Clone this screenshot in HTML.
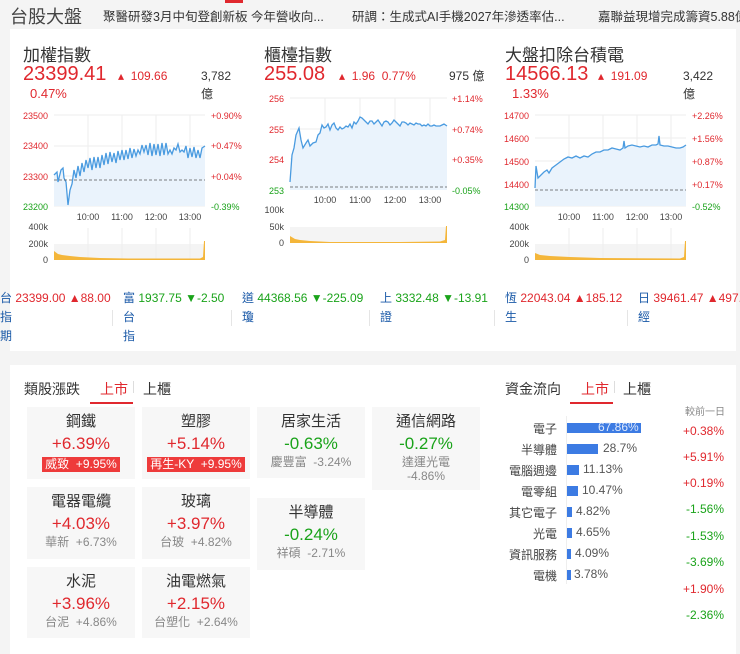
<!DOCTYPE html>
<html><head><meta charset="utf-8"><style>
*{margin:0;padding:0;box-sizing:border-box}
body{width:740px;height:654px;background:#f4f4f4;font-family:"Liberation Sans","Noto Sans CJK TC",sans-serif;position:relative;overflow:hidden;color:#333}
.a{position:absolute;white-space:nowrap}
.r{color:#e0282e}.g{color:#1aa31a}.bl{color:#1b5aa8}
.card{position:absolute;background:#fff}
.tile{position:absolute;background:#f7f7f7;text-align:center;width:108px}
.tile .n{font-size:15px;color:#333;margin-top:6px;line-height:18px}
.tile .p{font-size:17px;line-height:22px;margin-top:2px}
.tile .s{font-size:12px;color:#888;line-height:14px}
.tag{display:inline-block;background:#ee3b3b;color:#fff;font-size:12px;padding:0 3px;line-height:15px}
.rl{position:absolute;font-size:12px;color:#444;text-align:right;width:70px;left:487px}
.bar{position:absolute;left:567px;height:10px;background:#3c7be3}
.bv{position:absolute;font-size:12px;color:#555}
.cv{position:absolute;right:16px;font-size:12px}
</style></head><body>
<div class="a" style="left:225px;top:0;width:18px;height:3px;background:#e0282e"></div>
<div class="a" style="left:10px;top:3px;font-size:18px;color:#444">台股大盤</div>
<div class="a" style="left:103px;top:6px;font-size:12.5px;color:#333">聚醫研發3月中旬登創新板 今年營收向...</div>
<div class="a" style="left:352px;top:6px;font-size:12.5px;color:#333">研調：生成式AI手機2027年滲透率估...</div>
<div class="a" style="left:598px;top:6px;font-size:12.5px;color:#333">嘉聯益現增完成籌資5.88億</div>

<div class="card" style="left:10px;top:29px;width:726px;height:322px"></div>

<div class="a" style="left:23px;top:41px;font-size:17px;color:#333">加權指數</div>
<div class="a r" style="left:23px;top:63px;font-size:20px">23399.41</div>
<div class="a r" style="left:118px;top:69px;font-size:12px">▴ &nbsp;109.66</div>
<div class="a" style="left:201px;top:67px;font-size:12px;color:#333;line-height:18px">3,782<br>億</div>
<div class="a r" style="left:30px;top:86px;font-size:13px">0.47%</div>
<div class="a" style="left:264px;top:41px;font-size:17px;color:#333">櫃檯指數</div>
<div class="a r" style="left:264px;top:63px;font-size:20px">255.08</div>
<div class="a r" style="left:339px;top:69px;font-size:12px">▴ &nbsp;1.96 &nbsp;0.77%</div>
<div class="a" style="left:449px;top:67px;font-size:12px;color:#333">975 億</div>
<div class="a" style="left:505px;top:41px;font-size:17px;color:#333">大盤扣除台積電</div>
<div class="a r" style="left:505px;top:63px;font-size:20px">14566.13</div>
<div class="a r" style="left:598px;top:69px;font-size:12px">▴ &nbsp;191.09</div>
<div class="a" style="left:683px;top:67px;font-size:12px;color:#333;line-height:18px">3,422<br>億</div>
<div class="a r" style="left:512px;top:86px;font-size:13px">1.33%</div>

<svg class="a" style="left:0;top:0" width="740" height="270" font-family="Liberation Sans" font-size="9">
<g>
<g stroke="#eee" stroke-width="1"><line x1="54" y1="115" x2="205" y2="115"/><line x1="54" y1="146" x2="205" y2="146"/><line x1="54" y1="176" x2="205" y2="176"/><line x1="54" y1="206" x2="205" y2="206"/><line x1="88" y1="115" x2="88" y2="206"/><line x1="122" y1="115" x2="122" y2="206"/><line x1="156" y1="115" x2="156" y2="206"/><line x1="190" y1="115" x2="190" y2="206"/></g>
<path d="M54 175 L57 172 L58 182 L61 170 L63 168 L64 178 L66 182 L68 205 L70 190 L72 184 L74 170 L76 178 L78 166 L80 176 L82 163 L84 172 L86 160 L88 168 L90 158 L92 170 L94 157 L96 168 L98 157 L100 168 L102 155 L104 165 L106 153 L108 164 L110 152 L112 162 L114 153 L116 163 L118 151 L120 160 L122 150 L124 160 L126 150 L128 159 L130 148 L132 158 L134 149 L136 156 L138 150 L140 154 L142 145 L144 152 L146 145 L148 155 L150 143 L152 156 L154 144 L156 155 L158 144 L160 156 L162 143 L164 155 L166 143 L168 154 L170 150 L172 154 L174 148 L176 150 L178 144 L180 152 L182 150 L184 152 L186 146 L188 158 L190 148 L192 157 L194 147 L196 158 L198 150 L200 158 L202 148 L205 146 L205 206 L54 206Z" fill="#eaf3fc" stroke="none"/>
<path d="M54 175 L57 172 L58 182 L61 170 L63 168 L64 178 L66 182 L68 205 L70 190 L72 184 L74 170 L76 178 L78 166 L80 176 L82 163 L84 172 L86 160 L88 168 L90 158 L92 170 L94 157 L96 168 L98 157 L100 168 L102 155 L104 165 L106 153 L108 164 L110 152 L112 162 L114 153 L116 163 L118 151 L120 160 L122 150 L124 160 L126 150 L128 159 L130 148 L132 158 L134 149 L136 156 L138 150 L140 154 L142 145 L144 152 L146 145 L148 155 L150 143 L152 156 L154 144 L156 155 L158 144 L160 156 L162 143 L164 155 L166 143 L168 154 L170 150 L172 154 L174 148 L176 150 L178 144 L180 152 L182 150 L184 152 L186 146 L188 158 L190 148 L192 157 L194 147 L196 158 L198 150 L200 158 L202 148 L205 146" fill="none" stroke="#4a9be0" stroke-width="1.3"/>
<line x1="54" y1="180" x2="205" y2="180" stroke="#555" stroke-dasharray="3,2" stroke-width="0.8"/>
<g fill="#e0282e" text-anchor="end"><text x="48" y="119">23500</text><text x="48" y="149">23400</text><text x="48" y="180">23300</text></g><text x="48" y="210" fill="#1aa31a" text-anchor="end">23200</text>
<g fill="#e0282e"><text x="211" y="119">+0.90%</text><text x="211" y="149">+0.47%</text><text x="211" y="180">+0.04%</text></g><text x="211" y="210" fill="#1aa31a">-0.39%</text>
<g fill="#444" text-anchor="middle"><text x="88" y="220">10:00</text><text x="122" y="220">11:00</text><text x="156" y="220">12:00</text><text x="190" y="220">13:00</text></g>
<rect x="54" y="244" width="151" height="16" fill="#f4f4f4"/>
<g stroke="#eee"><line x1="88" y1="228" x2="88" y2="260"/><line x1="122" y1="228" x2="122" y2="260"/><line x1="156" y1="228" x2="156" y2="260"/><line x1="190" y1="228" x2="190" y2="260"/></g>
<path d="M54 260 L54 251 L58 254 L62 255 L70 256 L80 257 L100 258 L130 258.5 L200 258.5 L203 257 L204 241 L205 241 L205 260Z" fill="#f4b63a"/>
<g fill="#444" text-anchor="end"><text x="48" y="230">400k</text><text x="48" y="247">200k</text><text x="48" y="263">0</text></g>
</g>
<g>
<g stroke="#eee"><line x1="290" y1="98" x2="447" y2="98"/><line x1="290" y1="129" x2="447" y2="129"/><line x1="290" y1="159" x2="447" y2="159"/><line x1="325" y1="98" x2="325" y2="190"/><line x1="360" y1="98" x2="360" y2="190"/><line x1="395" y1="98" x2="395" y2="190"/><line x1="430" y1="98" x2="430" y2="190"/></g>
<path d="M290 182 L292 155 L294 148 L296 135 L299 128 L301 140 L303 148 L306 143 L308 140 L310 146 L313 143 L316 142 L318 135 L320 133 L322 125 L324 128 L326 127 L328 124 L330 130 L332 125 L334 123 L336 128 L338 130 L340 127 L342 129 L344 128 L346 126 L348 127 L350 124 L352 128 L354 122 L356 124 L358 121 L360 117 L362 118 L364 120 L366 122 L368 124 L370 121 L372 121 L374 124 L376 122 L378 120 L380 123 L382 126 L384 122 L386 121 L388 122 L390 125 L392 123 L394 120 L396 122 L398 124 L400 126 L402 122 L404 122 L406 123 L408 125 L410 123 L412 124 L414 125 L416 123 L418 124 L420 124 L422 126 L424 125 L426 126 L428 124 L430 126 L432 126 L434 125 L436 126 L438 126 L440 126 L442 125 L444 124 L447 126 L447 190 L290 190Z" fill="#eaf3fc"/>
<path d="M290 182 L292 155 L294 148 L296 135 L299 128 L301 140 L303 148 L306 143 L308 140 L310 146 L313 143 L316 142 L318 135 L320 133 L322 125 L324 128 L326 127 L328 124 L330 130 L332 125 L334 123 L336 128 L338 130 L340 127 L342 129 L344 128 L346 126 L348 127 L350 124 L352 128 L354 122 L356 124 L358 121 L360 117 L362 118 L364 120 L366 122 L368 124 L370 121 L372 121 L374 124 L376 122 L378 120 L380 123 L382 126 L384 122 L386 121 L388 122 L390 125 L392 123 L394 120 L396 122 L398 124 L400 126 L402 122 L404 122 L406 123 L408 125 L410 123 L412 124 L414 125 L416 123 L418 124 L420 124 L422 126 L424 125 L426 126 L428 124 L430 126 L432 126 L434 125 L436 126 L438 126 L440 126 L442 125 L444 124 L447 126" fill="none" stroke="#4a9be0" stroke-width="1.3"/>
<line x1="290" y1="187" x2="447" y2="187" stroke="#555" stroke-dasharray="3,2" stroke-width="0.8"/>
<g fill="#e0282e" text-anchor="end"><text x="284" y="102">256</text><text x="284" y="133">255</text><text x="284" y="163">254</text></g><text x="284" y="194" fill="#1aa31a" text-anchor="end">253</text>
<g fill="#e0282e"><text x="452" y="102">+1.14%</text><text x="452" y="133">+0.74%</text><text x="452" y="163">+0.35%</text></g><text x="452" y="194" fill="#1aa31a">-0.05%</text>
<g fill="#444" text-anchor="middle"><text x="325" y="203">10:00</text><text x="360" y="203">11:00</text><text x="395" y="203">12:00</text><text x="430" y="203">13:00</text></g>
<rect x="290" y="227" width="157" height="16" fill="#f4f4f4"/>
<path d="M290 243 L290 236 L295 239 L300 240 L310 241 L330 242 L400 242 L440 241.5 L445 240 L446 226 L447 226 L447 243Z" fill="#f4b63a"/>
<g fill="#444" text-anchor="end"><text x="284" y="213">100k</text><text x="284" y="230">50k</text><text x="284" y="246">0</text></g>
</g>
<g>
<g stroke="#eee"><line x1="535" y1="115" x2="686" y2="115"/><line x1="535" y1="138" x2="686" y2="138"/><line x1="535" y1="161" x2="686" y2="161"/><line x1="535" y1="184" x2="686" y2="184"/><line x1="535" y1="206" x2="686" y2="206"/><line x1="569" y1="115" x2="569" y2="206"/><line x1="603" y1="115" x2="603" y2="206"/><line x1="637" y1="115" x2="637" y2="206"/><line x1="671" y1="115" x2="671" y2="206"/></g>
<path d="M535 188 L536 166 L538 178 L541 175 L544 172 L547 170 L549 173 L552 168 L556 165 L560 162 L564 159 L568 157 L572 158 L576 156 L580 158 L584 156 L588 157 L592 154 L596 152 L600 152 L604 150 L608 150 L612 148 L616 149 L620 150 L623 148 L624 141 L625 148 L628 146 L632 145 L636 146 L640 147 L644 146 L648 147 L652 145 L656 145 L658 144 L659 136 L660 145 L664 146 L668 146 L672 147 L676 148 L680 148 L683 147 L686 145 L686 206 L535 206Z" fill="#eaf3fc"/>
<path d="M535 188 L536 166 L538 178 L541 175 L544 172 L547 170 L549 173 L552 168 L556 165 L560 162 L564 159 L568 157 L572 158 L576 156 L580 158 L584 156 L588 157 L592 154 L596 152 L600 152 L604 150 L608 150 L612 148 L616 149 L620 150 L623 148 L624 141 L625 148 L628 146 L632 145 L636 146 L640 147 L644 146 L648 147 L652 145 L656 145 L658 144 L659 136 L660 145 L664 146 L668 146 L672 147 L676 148 L680 148 L683 147 L686 145" fill="none" stroke="#4a9be0" stroke-width="1.3"/>
<line x1="535" y1="190" x2="686" y2="190" stroke="#555" stroke-dasharray="3,2" stroke-width="0.8"/>
<g fill="#e0282e" text-anchor="end"><text x="529" y="119">14700</text><text x="529" y="142">14600</text><text x="529" y="165">14500</text><text x="529" y="188">14400</text></g><text x="529" y="210" fill="#1aa31a" text-anchor="end">14300</text>
<g fill="#e0282e"><text x="692" y="119">+2.26%</text><text x="692" y="142">+1.56%</text><text x="692" y="165">+0.87%</text><text x="692" y="188">+0.17%</text></g><text x="692" y="210" fill="#1aa31a">-0.52%</text>
<g fill="#444" text-anchor="middle"><text x="569" y="220">10:00</text><text x="603" y="220">11:00</text><text x="637" y="220">12:00</text><text x="671" y="220">13:00</text></g>
<rect x="535" y="244" width="151" height="16" fill="#f4f4f4"/>
<g stroke="#eee"><line x1="569" y1="228" x2="569" y2="260"/><line x1="603" y1="228" x2="603" y2="260"/><line x1="637" y1="228" x2="637" y2="260"/><line x1="671" y1="228" x2="671" y2="260"/></g>
<path d="M535 260 L535 253 L540 255 L550 256 L570 257 L600 258 L680 258.5 L684 257 L685 241 L686 241 L686 260Z" fill="#f4b63a"/>
<g fill="#444" text-anchor="end"><text x="529" y="230">400k</text><text x="529" y="247">200k</text><text x="529" y="263">0</text></g>
</g>
</svg>

<div class="a" style="left:0;top:289px;font-size:12px;line-height:19px"><span class="bl">台</span> <span class="r">23399.00 ▲88.00</span><br><span class="bl">指</span><br><span class="bl">期</span></div>
<div class="a" style="left:123px;top:289px;font-size:12px;line-height:19px"><span class="bl">富</span> <span class="g">1937.75 ▼-2.50</span><br><span class="bl">台</span><br><span class="bl">指</span></div>
<div class="a" style="left:242px;top:289px;font-size:12px;line-height:19px"><span class="bl">道</span> <span class="g">44368.56 ▼-225.09</span><br><span class="bl">瓊</span></div>
<div class="a" style="left:380px;top:289px;font-size:12px;line-height:19px"><span class="bl">上</span> <span class="g">3332.48 ▼-13.91</span><br><span class="bl">證</span></div>
<div class="a" style="left:505px;top:289px;font-size:12px;line-height:19px"><span class="bl">恆</span> <span class="r">22043.04 ▲185.12</span><br><span class="bl">生</span></div>
<div class="a" style="left:638px;top:289px;font-size:12px;line-height:19px"><span class="bl">日</span> <span class="r">39461.47 ▲497.1</span><br><span class="bl">經</span></div>
<div class="a" style="left:112px;top:310px;width:1px;height:16px;background:#e5e5e5"></div>
<div class="a" style="left:231px;top:310px;width:1px;height:16px;background:#e5e5e5"></div>
<div class="a" style="left:369px;top:310px;width:1px;height:16px;background:#e5e5e5"></div>
<div class="a" style="left:494px;top:310px;width:1px;height:16px;background:#e5e5e5"></div>
<div class="a" style="left:627px;top:310px;width:1px;height:16px;background:#e5e5e5"></div>

<div class="card" style="left:10px;top:365px;width:726px;height:289px"></div>
<div class="a" style="left:24px;top:379px;font-size:14px;color:#333">類股漲跌</div>
<div class="a r" style="left:100px;top:379px;font-size:14px">上市</div>
<div class="a" style="left:133px;top:381px;width:1px;height:12px;background:#ddd"></div>
<div class="a" style="left:143px;top:379px;font-size:14px;color:#333">上櫃</div>
<div class="a" style="left:90px;top:402px;width:43px;height:2px;background:#e0282e"></div>

<div class="tile" style="left:27px;top:407px;height:72px"><div class="n">鋼鐵</div><div class="p r">+6.39%</div><div class="tag">威致 &nbsp;+9.95%</div></div>
<div class="tile" style="left:142px;top:407px;height:72px"><div class="n">塑膠</div><div class="p r">+5.14%</div><div class="tag">再生-KY &nbsp;+9.95%</div></div>
<div class="tile" style="left:257px;top:407px;height:71px"><div class="n">居家生活</div><div class="p g">-0.63%</div><div class="s">慶豐富 &nbsp;-3.24%</div></div>
<div class="tile" style="left:372px;top:407px;height:83px"><div class="n">通信網路</div><div class="p g">-0.27%</div><div class="s">達運光電<br>-4.86%</div></div>
<div class="tile" style="left:27px;top:487px;height:72px"><div class="n">電器電纜</div><div class="p r">+4.03%</div><div class="s">華新 &nbsp;+6.73%</div></div>
<div class="tile" style="left:142px;top:487px;height:72px"><div class="n">玻璃</div><div class="p r">+3.97%</div><div class="s">台玻 &nbsp;+4.82%</div></div>
<div class="tile" style="left:257px;top:498px;height:72px"><div class="n">半導體</div><div class="p g">-0.24%</div><div class="s">祥碩 &nbsp;-2.71%</div></div>
<div class="tile" style="left:27px;top:567px;height:71px"><div class="n">水泥</div><div class="p r">+3.96%</div><div class="s">台泥 &nbsp;+4.86%</div></div>
<div class="tile" style="left:142px;top:567px;height:71px"><div class="n">油電燃氣</div><div class="p r">+2.15%</div><div class="s">台塑化 &nbsp;+2.64%</div></div>

<div class="a" style="left:505px;top:379px;font-size:14px;color:#333">資金流向</div>
<div class="a r" style="left:581px;top:379px;font-size:14px">上市</div>
<div class="a" style="left:614px;top:381px;width:1px;height:12px;background:#ddd"></div>
<div class="a" style="left:623px;top:379px;font-size:14px;color:#333">上櫃</div>
<div class="a" style="left:570px;top:402px;width:43px;height:2px;background:#e0282e"></div>
<div class="a" style="left:685px;top:403px;font-size:10px;color:#888">較前一日</div>
<div class="a" style="left:566px;top:416px;width:1px;height:168px;background:#eee"></div>
<div class="rl" style="top:420px">電子</div><div class="bar" style="top:423px;width:74px"></div><div class="bv" style="left:598px;top:420px;color:#dfe9fb">67.86%</div>
<div class="rl" style="top:441px">半導體</div><div class="bar" style="top:444px;width:31px"></div><div class="bv" style="left:603px;top:441px">28.7%</div>
<div class="rl" style="top:462px">電腦週邊</div><div class="bar" style="top:465px;width:12px"></div><div class="bv" style="left:583px;top:462px">11.13%</div>
<div class="rl" style="top:483px">電零組</div><div class="bar" style="top:486px;width:11px"></div><div class="bv" style="left:582px;top:483px">10.47%</div>
<div class="rl" style="top:504px">其它電子</div><div class="bar" style="top:507px;width:5px"></div><div class="bv" style="left:576px;top:504px">4.82%</div>
<div class="rl" style="top:525px">光電</div><div class="bar" style="top:528px;width:5px"></div><div class="bv" style="left:576px;top:525px">4.65%</div>
<div class="rl" style="top:546px">資訊服務</div><div class="bar" style="top:549px;width:4px"></div><div class="bv" style="left:575px;top:546px">4.09%</div>
<div class="rl" style="top:567px">電機</div><div class="bar" style="top:570px;width:4px"></div><div class="bv" style="left:574px;top:567px">3.78%</div>
<div class="cv r" style="top:424px">+0.38%</div>
<div class="cv r" style="top:450px">+5.91%</div>
<div class="cv r" style="top:476px">+0.19%</div>
<div class="cv g" style="top:502px">-1.56%</div>
<div class="cv g" style="top:529px">-1.53%</div>
<div class="cv g" style="top:555px">-3.69%</div>
<div class="cv r" style="top:582px">+1.90%</div>
<div class="cv g" style="top:608px">-2.36%</div>
</body></html>
